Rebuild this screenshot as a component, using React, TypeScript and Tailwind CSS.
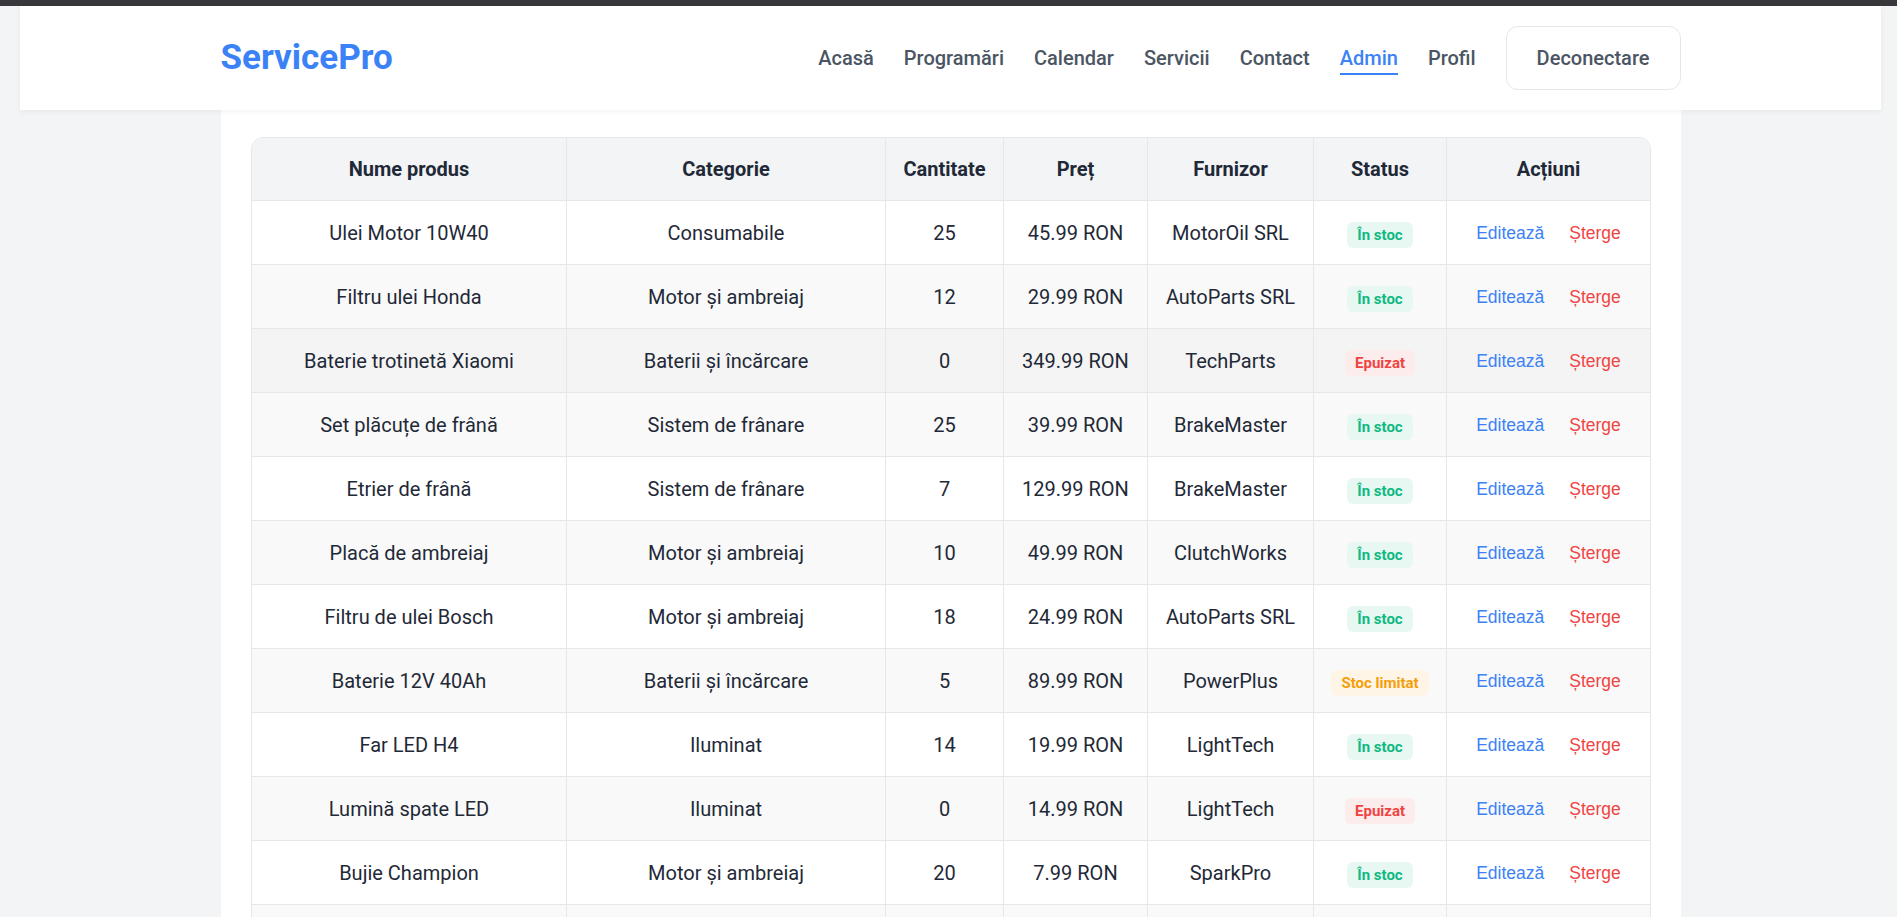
import React from 'react'

type Status = 'in' | 'out' | 'low'

interface Product {
  name: string
  category: string
  qty: number
  price: string
  supplier: string
  status: Status
}

const products: Product[] = [
  { name: 'Ulei Motor 10W40', category: 'Consumabile', qty: 25, price: '45.99 RON', supplier: 'MotorOil SRL', status: 'in' },
  { name: 'Filtru ulei Honda', category: 'Motor și ambreiaj', qty: 12, price: '29.99 RON', supplier: 'AutoParts SRL', status: 'in' },
  { name: 'Baterie trotinetă Xiaomi', category: 'Baterii și încărcare', qty: 0, price: '349.99 RON', supplier: 'TechParts', status: 'out' },
  { name: 'Set plăcuțe de frână', category: 'Sistem de frânare', qty: 25, price: '39.99 RON', supplier: 'BrakeMaster', status: 'in' },
  { name: 'Etrier de frână', category: 'Sistem de frânare', qty: 7, price: '129.99 RON', supplier: 'BrakeMaster', status: 'in' },
  { name: 'Placă de ambreiaj', category: 'Motor și ambreiaj', qty: 10, price: '49.99 RON', supplier: 'ClutchWorks', status: 'in' },
  { name: 'Filtru de ulei Bosch', category: 'Motor și ambreiaj', qty: 18, price: '24.99 RON', supplier: 'AutoParts SRL', status: 'in' },
  { name: 'Baterie 12V 40Ah', category: 'Baterii și încărcare', qty: 5, price: '89.99 RON', supplier: 'PowerPlus', status: 'low' },
  { name: 'Far LED H4', category: 'Iluminat', qty: 14, price: '19.99 RON', supplier: 'LightTech', status: 'in' },
  { name: 'Lumină spate LED', category: 'Iluminat', qty: 0, price: '14.99 RON', supplier: 'LightTech', status: 'out' },
  { name: 'Bujie Champion', category: 'Motor și ambreiaj', qty: 20, price: '7.99 RON', supplier: 'SparkPro', status: 'in' },
  { name: 'Cameră anvelopă 10"', category: 'Roți și anvelope', qty: 9, price: '34.99 RON', supplier: 'TyreShop', status: 'in' },
]

const navLinks = ['Acasă', 'Programări', 'Calendar', 'Servicii', 'Contact', 'Admin', 'Profil']

function StatusBadge({ status }: { status: Status }) {
  if (status === 'out')
    return <span className="inline-block rounded-[6px] bg-[#fdecec] px-[10px] py-[4px] align-middle text-[15px] font-bold leading-[18px] text-[#ef4444]">Epuizat</span>
  if (status === 'low')
    return <span className="inline-block rounded-[6px] bg-[#fef5e7] px-[10px] py-[4px] align-middle text-[15px] font-bold leading-[18px] text-[#f59e0b]">Stoc limitat</span>
  return <span className="inline-block rounded-[6px] bg-[#e7f8f2] px-[10px] py-[4px] align-middle text-[15px] font-bold leading-[18px] text-[#10b981]">În stoc</span>
}

const th = 'border-b border-r border-[#e5e7eb] py-4 text-center text-[20px] font-bold leading-[30px] text-[#1f2937]'
const td = 'border-b border-r border-[#e5e7eb] px-2 pt-[17px] pb-[15px] text-center text-[20px] leading-[31px] text-[#1f2937]'

export default function App() {
  return (
    <div className="h-screen overflow-hidden bg-[#f3f4f6] font-['Roboto','Open_Sans',sans-serif]">
      <div className="h-[6px] bg-[#38373c]" />

      {/* Header */}
      <header className="relative z-10 ml-[20px] mr-[16px] bg-white py-[20px] shadow-[0_2px_6px_rgba(0,0,0,0.05)]">
        <div className="mx-auto flex w-[1460px] items-center justify-between">
          <div className="text-[35px] font-bold text-[#3b82f6]">ServicePro</div>
          <nav className="flex items-center gap-[30px]">
            {navLinks.map(link => (
              <a
                key={link}
                className={
                  link === 'Admin'
                    ? 'relative text-[20px] font-medium leading-[28px] text-[#3b82f6]'
                    : 'text-[20px] font-medium leading-[28px] text-[#4b5563]'
                }
              >
                {link}
                {link === 'Admin' && <span className="absolute left-0 right-0 top-full mt-px h-[2px] bg-[#3b82f6]" />}
              </a>
            ))}
            <button className="rounded-xl border border-[#e5e7eb] bg-white px-[30px] py-[17px] text-[20px] font-medium leading-[28px] text-[#4b5563]">
              Deconectare
            </button>
          </nav>
        </div>
      </header>

      {/* Content */}
      <div className="pl-[5px]">
        <main className="mx-auto min-h-[820px] w-[1460px] bg-white px-[30px] pt-[27px]">
          <div className="overflow-hidden rounded-xl border border-[#e5e7eb]">
            <table className="w-full table-fixed border-separate border-spacing-0">
              <thead>
                <tr className="bg-[#f3f4f6]">
                  <th className={`${th} w-[315px]`}>Nume produs</th>
                  <th className={`${th} w-[319px]`}>Categorie</th>
                  <th className={`${th} w-[118px]`}>Cantitate</th>
                  <th className={`${th} w-[144px]`}>Preț</th>
                  <th className={`${th} w-[166px]`}>Furnizor</th>
                  <th className={`${th} w-[133px]`}>Status</th>
                  <th className={`${th} border-r-0`}>Acțiuni</th>
                </tr>
              </thead>
              <tbody>
                {products.map((p, i) => (
                  <tr key={p.name} className={i === 2 ? 'bg-[#f4f4f4]' : i % 2 === 1 ? 'bg-[#f9f9f9]' : 'bg-white'}>
                    <td className={td}>{p.name}</td>
                    <td className={td}>{p.category}</td>
                    <td className={td}>{p.qty}</td>
                    <td className={td}>{p.price}</td>
                    <td className={td}>{p.supplier}</td>
                    <td className={td}><StatusBadge status={p.status} /></td>
                    <td className={`${td} border-r-0`}>
                      <div className="flex items-center justify-center gap-[25px] font-['Liberation_Sans',Arial,sans-serif] text-[17.5px]">
                        <button className="text-[#3b82f6]">Editează</button>
                        <button className="text-[#ef4444]">Șterge</button>
                      </div>
                    </td>
                  </tr>
                ))}
              </tbody>
            </table>
          </div>
        </main>
      </div>
    </div>
  )
}
